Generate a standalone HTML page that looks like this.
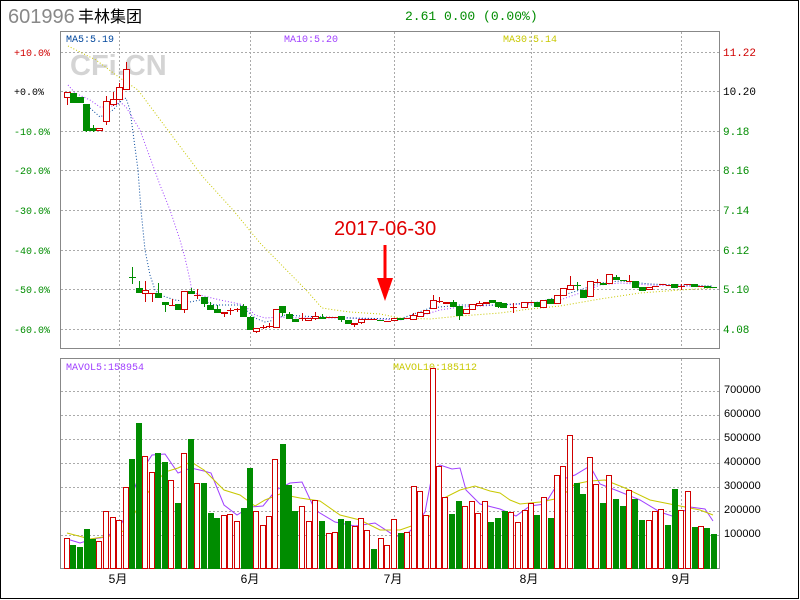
<!DOCTYPE html>
<html><head><meta charset="utf-8"><style>
html,body{margin:0;padding:0;background:#fff;}
body{width:800px;height:600px;overflow:hidden;position:relative;}
svg{position:absolute;left:0;top:0;}
</style></head><body>
<svg id="s" width="800" height="600" xmlns="http://www.w3.org/2000/svg" font-family="Liberation Mono, monospace">
<rect x="0.5" y="0.5" width="798" height="598" fill="#fff" stroke="#000"/>
<text x="8" y="23" font-family="Liberation Sans, sans-serif" font-size="20" fill="#888">601996</text>
<text x="78" y="22" font-family="Liberation Sans, 'Noto Sans CJK SC', sans-serif" font-size="16" fill="#000">丰林集团</text>
<text x="405" y="20" font-size="13" fill="#008c00">2.61 0.00 (0.00%)</text>
<text x="70" y="75" font-family="Liberation Sans, sans-serif" font-weight="bold" font-size="29" fill="#d4d4d4">CFi.CN</text>
<g id="grid" stroke="#aaa" stroke-dasharray="2,2" stroke-width="1"></g>
<rect x="60.5" y="31.5" width="659" height="317" fill="none" stroke="#888"/>
<rect x="60.5" y="358.5" width="659" height="210" fill="none" stroke="#888"/>
<g font-size="10">
<text x="66" y="42" fill="#00469c">MA5:5.19</text>
<text x="284" y="42" fill="#a040ff">MA10:5.20</text>
<text x="503" y="42" fill="#c8c800">MA30:5.14</text>
<text x="66" y="370" fill="#a040ff">MAVOL5:158954</text>
<text x="393" y="370" fill="#c8c800">MAVOL10:185112</text>
</g>
<g font-size="10" text-anchor="end">
<text x="50" y="56" fill="#d00000">+10.0%</text>
<text x="44" y="95" fill="#000">+0.0%</text>
<text x="50" y="135" fill="#008c00">-10.0%</text>
<text x="50" y="174" fill="#008c00">-20.0%</text>
<text x="50" y="214" fill="#008c00">-30.0%</text>
<text x="50" y="254" fill="#008c00">-40.0%</text>
<text x="50" y="293" fill="#008c00">-50.0%</text>
<text x="50" y="333" fill="#008c00">-60.0%</text>
</g>
<g font-size="11">
<text x="723" y="56" fill="#d00000">11.22</text>
<text x="723" y="95" fill="#000">10.20</text>
<text x="723" y="135" fill="#008c00">9.18</text>
<text x="723" y="174" fill="#008c00">8.16</text>
<text x="723" y="214" fill="#008c00">7.14</text>
<text x="723" y="254" fill="#008c00">6.12</text>
<text x="723" y="293" fill="#008c00">5.10</text>
<text x="723" y="333" fill="#008c00">4.08</text>
</g>
<g font-size="11" fill="#000" font-family="Liberation Sans, sans-serif">
<text x="724" y="393">700000</text>
<text x="724" y="417">600000</text>
<text x="724" y="441">500000</text>
<text x="724" y="465">400000</text>
<text x="724" y="489">300000</text>
<text x="724" y="513">200000</text>
<text x="724" y="537">100000</text>
</g>
<g font-size="12" fill="#000" font-family="Liberation Sans, 'Noto Sans CJK SC', sans-serif" text-anchor="middle">
<text x="118" y="583">5月</text>
<text x="250" y="583">6月</text>
<text x="393" y="583">7月</text>
<text x="529" y="583">8月</text>
<text x="681" y="583">9月</text>
</g>
<g id="ma"></g>
<g id="c"></g>
<g id="v"></g>
<text x="334" y="235" font-family="Liberation Sans, sans-serif" font-size="20" fill="#e00000">2017-06-30</text>
<line x1="385" y1="245" x2="385" y2="285" stroke="#f00" stroke-width="3"/>
<polygon points="377,278 393,278 385,301" fill="#f00"/>
</svg>
<script>
var NS="http://www.w3.org/2000/svg";
function el(p,n,a){var e=document.createElementNS(NS,n);for(var k in a)e.setAttribute(k,a[k]);document.getElementById(p).appendChild(e);return e;}
var G=[52,91,131,170,210,250,289,329];G.forEach(function(y){el("grid","line",{x1:61,x2:719,y1:y+.5,y2:y+.5});});
[391,415,439,463,487,511,535].forEach(function(y){el("grid","line",{x1:61,x2:719,y1:y+.5,y2:y+.5});});
[119,250,394,531,681].forEach(function(x){el("grid","line",{x1:x+.5,x2:x+.5,y1:32,y2:348});el("grid","line",{x1:x+.5,x2:x+.5,y1:359,y2:568});});
var R="#d00000",Gr="#008c00";
// x,color(r/g),top,bottom,wickTop,wickBot
var C=[[67,'r',92,97,92,105],[73,'g',93,102],[80,'g',97,102],[86,'g',104,130,104,132],[93,'g',128,130,125,132],[99,'r',128,130],[106,'r',101,121,96,125],[113,'r',99,104,92,106],[119,'r',87,99,83,100],[126,'r',69,89,62,90],
[132,'g',277,277,267,284],[139,'g',288,292,281,293],[145,'r',290,293,281,302],[152,'r',293,293,293,302],[158,'g',293,297,283,298],[165,'g',302,304,302,312],[172,'r',305,305,299,306],[178,'g',304,309,304,310],[184,'r',291,309,291,313],[191,'g',291,293,288,293],[197,'r',295,295,289,299],[204,'g',297,303,297,307],[210,'g',305,309,302,310],[217,'g',309,312,305,312],[224,'r',312,313,312,317],[230,'r',310,310,308,315],[237,'r',309,309,308,312],[243,'g',306,316,304,316],[250,'g',317,329,316,330],[256,'r',328,331,328,333],[263,'r',327,327,325,329],[269,'r',326,326,323,328],[276,'r',309,327],[282,'g',306,312,306,316],[289,'g',314,318,312,319],[295,'g',319,321],[302,'r',318,318,313,321],[308,'r',318,320],
[315,'r',316,318,312,320],[322,'g',317,318,314,318],[329,'r',317,317],[334,'r',317,317],[341,'g',316,319,316,322],[348,'g',320,323],[354,'r',323,324,323,327],[361,'r',319,322,319,324],[368,'r',319,319],[373,'r',319,319],[380,'g',320,320],[387,'r',321,321],[394,'r',318,320],[400,'g',318,319],[407,'r',318,318],[413,'r',315,319,313,319],[420,'r',312,316],[426,'r',310,313],[433,'r',300,308,295,308],[439,'r',301,301,297,303],[446,'r',302,303],[453,'g',302,306,300,307],[459,'g',306,315,306,320],[466,'r',309,313],[472,'r',304,309],[479,'r',303,305,301,306],[486,'r',302,303],[492,'g',300,302],[498,'g',302,306,302,308],[503,'g',303,307],[513,'r',307,307,303,313],[524,'r',302,307],[531,'r',302,302],[537,'g',302,306],[543,'r',300,307],[550,'g',299,303],[557,'r',295,303],[563,'r',288,295],[570,'r',285,289,276,289],[577,'g',285,285,282,290],[583,'g',290,297],[590,'r',281,296],[597,'r',282,282,279,283],[603,'g',283,284],[609,'r',274,283],[616,'g',277,279,275,280],[623,'g',280,280],[629,'r',281,281,275,282],[635,'g',281,287],[642,'g',287,290],[649,'r',287,289],[655,'r',286,286],[662,'r',284,284],[669,'r',285,285],[674,'g',284,287],[681,'r',286,286,284,290],[687,'r',284,284],[694,'g',284,286],[701,'r',286,286],[707,'g',286,287],[713,'g',287,287]];
C.forEach(function(d){var x=d[0],col=d[1]=='r'?R:Gr,t=d[2],b=d[3],wt=d[4]===undefined?t:d[4],wb=d[5]===undefined?b:d[5];
if(wt<t)el("c","line",{x1:x+.5,x2:x+.5,y1:wt,y2:t,stroke:col});
if(wb>b)el("c","line",{x1:x+.5,x2:x+.5,y1:b,y2:wb,stroke:col});
if(b-t<1){el("c","line",{x1:x-3,x2:x+4,y1:t+.5,y2:t+.5,stroke:col});}
else if(d[1]=='r')el("c","rect",{x:x-2.5,y:t+.5,width:6,height:b-t,fill:"#fff",stroke:col});
else el("c","rect",{x:x-3,y:t,width:7,height:b-t+1,fill:col});});
var V=[[67,'r',538],[73,'g',545],[80,'g',547],[87,'g',529],[93,'g',539],[99,'r',541],[106,'r',511],[113,'r',517],[119,'r',520],[126,'r',487],[132,'g',459],[139,'g',423],[145,'r',456],[152,'r',472],[158,'g',453],[165,'g',462],[171,'r',480],[178,'g',503],[184,'r',453],[191,'g',439],[197,'r',483],[204,'g',483],[211,'g',513],[217,'g',518],[224,'r',515],[230,'r',514],[237,'r',521],[244,'g',508],[250,'g',468],[256,'r',511],[263,'r',525],[269,'r',516],[275,'r',459],[283,'g',444],[289,'g',485],[295,'g',511],[302,'r',506],[309,'r',521],[315,'r',500],[322,'g',521],[329,'r',533],[335,'r',532],[341,'g',519],[348,'g',521],[355,'r',526],[361,'r',518],[367,'r',530],[374,'g',549],[381,'r',538],[387,'r',545],[394,'r',519],[401,'g',533],[407,'r',532],[414,'r',486],[420,'r',491],[426,'r',515],[433,'r',368],[439,'r',466],[445,'r',497],[452,'g',514],[459,'g',501],[465,'r',506],[472,'r',501],[478,'r',513],[485,'r',501],[491,'g',522],[498,'g',518],[505,'g',511],[511,'r',512],[518,'r',522],[525,'r',510],[531,'r',503],[537,'g',515],[544,'r',497],[551,'g',518],[557,'r',475],[563,'r',466],[570,'r',435],[577,'g',483],[583,'g',494],[590,'r',457],[596,'r',484],[603,'g',503],[609,'r',475],[616,'g',499],[623,'g',506],[629,'r',490],[635,'g',499],[642,'g',520],[649,'r',520],[655,'r',511],[661,'r',509],[668,'g',525],[675,'g',489],[681,'r',510],[688,'r',491],[695,'g',527],[701,'r',526],[707,'g',528],[714,'g',534]];
V.forEach(function(d){var x=d[0],t=d[2];if(d[1]=='r')el("v","rect",{x:x-2.5,y:t+.5,width:5,height:568-t,fill:"#fff",stroke:R});else el("v","rect",{x:x-3,y:t,width:6,height:569-t,fill:Gr});});
function pl(pts,col,dash){var a={points:pts.map(function(p){return p.join(",")}).join(" "),fill:"none",stroke:col,"stroke-width":1};if(dash)a["stroke-dasharray"]="1,2";el("ma","polyline",a);}
pl([[68,46],[96,60],[120,78],[138,90],[170,133],[203,177],[233,210],[260,243],[308,292],[322,308],[335,310],[350,312],[380,314],[400,318],[430,319],[460,316],[500,313],[530,309],[560,306],[600,299],[640,293],[680,290],[713,288]],"#c8c800",1);
pl([[68,85],[75,93],[90,100],[100,107],[110,107],[120,102],[126,107],[140,130],[160,185],[170,210],[180,240],[185,258],[190,280],[192,292],[200,295],[220,300],[240,304],[250,310],[255,315],[265,318],[280,317],[300,318],[350,318],[400,320],[420,316],[440,310],[460,307],[500,305],[530,304],[550,303],[560,300],[580,293],[600,285],[620,283],[650,285],[713,287]],"#a040ff",1);
pl([[90,108],[100,117],[113,110],[122,100],[126,98],[130,110],[138,170],[141,210],[145,250],[150,275],[155,290],[160,295],[175,300],[190,302],[200,300],[215,305],[240,305],[255,318],[265,322],[275,320],[285,315],[300,316],[350,318],[400,319],[430,308],[460,305],[500,305],[540,302],[560,296],[580,290],[600,283],[620,281],[650,284],[713,286]],"#00469c",1);
pl([[67,539],[80,543],[93,539],[106,537],[119,528],[126,515],[139,475],[152,455],[165,454],[178,473],[191,468],[204,471],[211,473],[224,505],[237,515],[250,507],[263,506],[276,490],[290,483],[302,482],[315,510],[335,522],[355,526],[375,523],[395,536],[405,536],[415,526],[425,512],[433,470],[440,465],[452,469],[460,468],[466,490],[480,504],[500,509],[516,516],[530,506],[545,504],[560,480],[575,475],[590,466],[600,484],[618,491],[640,500],[660,512],[675,517],[690,507],[705,509],[713,521]],"#a040ff");
pl([[67,533],[90,539],[110,536],[126,530],[139,505],[152,487],[165,472],[178,468],[191,462],[204,470],[224,490],[240,495],[255,506],[265,500],[280,494],[300,498],[320,501],[340,515],[360,520],[380,530],[400,530],[420,523],[427,520],[440,500],[460,490],[475,486],[490,491],[500,493],[510,500],[520,504],[540,502],[560,498],[575,484],[590,481],[605,480],[625,488],[650,500],[680,506],[700,510],[713,515]],"#c8c800");
</script>
</body></html>
